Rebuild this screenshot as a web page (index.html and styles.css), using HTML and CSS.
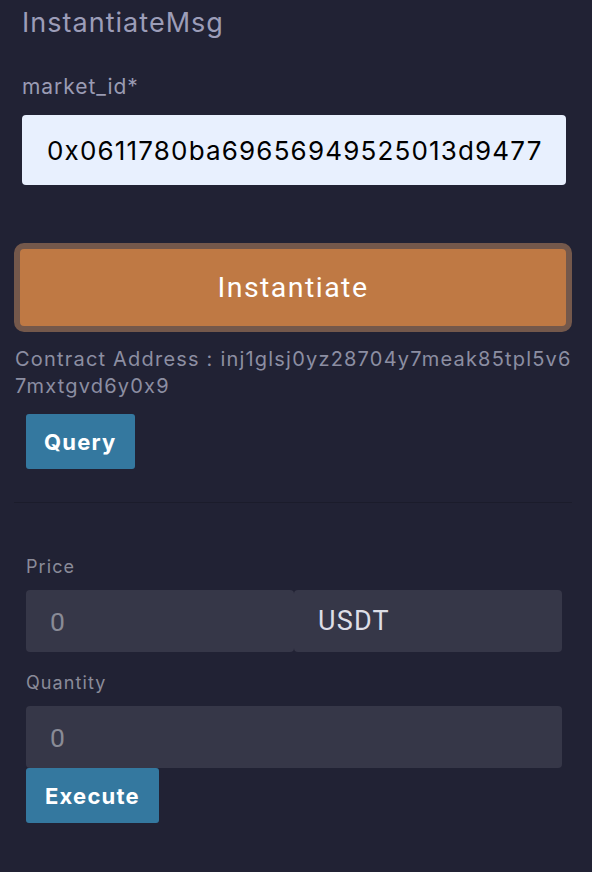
FILE: index.html
```html
<!DOCTYPE html>
<html lang="en">
<head>
<meta charset="utf-8">
<title>InstantiateMsg</title>
<link rel="stylesheet" href="styles.css">
</head>
<body>
<div class="page">
  <section class="msg">
    <h2 class="msg-title">InstantiateMsg</h2>
    <label class="msg-label" for="market">market_id*</label>
    <input id="market" class="light-input" type="text" value="0x0611780ba69656949525013d9477">
  </section>

  <button class="btn-instantiate" type="button">Instantiate</button>

  <p class="address">Contract Address : inj1glsj0yz28704y7meak85tpl5v67mxtgvd6y0x9</p>

  <button class="btn-blue btn-query" type="button">Query</button>

  <hr class="divider">

  <section class="exec">
    <label class="exec-label" for="price">Price</label>
    <div class="price-group">
      <input id="price" class="dark-input group-input" type="text" placeholder="0">
      <span class="unit">USDT</span>
    </div>

    <label class="exec-label exec-label-qty" for="qty">Quantity</label>
    <input id="qty" class="dark-input" type="text" placeholder="0">
    <button class="btn-blue btn-execute" type="button">Execute</button>
  </section>
</div>
</body>
</html>
```
FILE: styles.css
```css
* { box-sizing: border-box; }

html, body {
  margin: 0;
  padding: 0;
  background: #212234;
}

body {
  font-family: Inter, "Noto Sans", sans-serif;
  letter-spacing: 0.055em;
  width: 592px;
  height: 872px;
  overflow: hidden;
}

.page {
  padding: 7px 20px 0 14px;
}

.msg {
  padding: 0 6px 0 8px;
  display: flex;
  flex-direction: column;
  align-items: stretch;
}

.msg-title {
  margin: 0;
  font-size: 27px;
  line-height: 32px;
  font-weight: 400;
  color: #9c9db8;
  letter-spacing: 0.038em;
}

.msg-label {
  display: block;
  margin-top: 35px;
  font-size: 21px;
  line-height: 26px;
  color: #9a9bb3;
  letter-spacing: 0.045em;
}

.light-input {
  margin-top: 15px;
  height: 70px;
  width: 100%;
  border: 0;
  border-radius: 4px;
  background: #e8f0fe;
  color: #000;
  font-family: Inter, "Noto Sans", sans-serif;
  font-size: 26px;
  letter-spacing: 0.045em;
  padding: 0 10px 0 25px;
  outline: none;
}

.btn-instantiate {
  display: block;
  width: 100%;
  margin-top: 58px;
  height: 89px;
  border: 6px solid #74584b;
  border-radius: 10px;
  background: #bf7944;
  color: #fff;
  font-family: Roboto, "Noto Sans", sans-serif;
  font-size: 28.5px;
  letter-spacing: 0.051em;
  font-weight: 400;
  padding: 0;
  cursor: pointer;
}

.address {
  margin: 14px 0 0;
  padding-left: 1px;
  font-size: 20px;
  line-height: 27px;
  color: #8c8ea2;
  word-break: break-all;
  letter-spacing: 0.06em;
}

.btn-blue {
  display: block;
  height: 55px;
  border: 0;
  border-radius: 3px;
  background: #34789f;
  color: #fff;
  font-family: Inter, "Noto Sans", sans-serif;
  font-size: 22px;
  font-weight: 700;
  letter-spacing: 0.055em;
  padding: 0 18px;
  cursor: pointer;
}

.btn-query {
  margin: 14px 0 0 12px;
}

.divider {
  margin: 33px 0 0;
  border: 0;
  height: 1px;
  background: #1b1c2b;
}

.exec {
  padding: 0 10px 0 12px;
  display: flex;
  flex-direction: column;
  align-items: flex-start;
}

.exec-label {
  display: block;
  margin-top: 52px;
  margin-bottom: 11px;
  font-size: 18px;
  line-height: 24px;
  color: #8a8b99;
  letter-spacing: 0.06em;
}

.exec-label-qty {
  margin-top: 19px;
}

.price-group {
  display: flex;
  width: 100%;
  height: 62px;
}

.dark-input {
  width: 100%;
  height: 62px;
  border: 0;
  border-radius: 4px;
  background: #363748;
  color: #dddee6;
  font-family: Roboto, "Noto Sans", sans-serif;
  font-size: 26.5px;
  letter-spacing: 0.04em;
  padding: 0 10px 0 24px;
  outline: none;
}

.dark-input::placeholder {
  color: #898b96;
  opacity: 1;
}

.group-input {
  flex: 0 0 268px;
  width: 268px;
}

.unit {
  flex: 1;
  display: flex;
  align-items: center;
  background: #363748;
  border-radius: 4px;
  padding-left: 24px;
  color: #dddee6;
  font-family: Roboto, "Noto Sans", sans-serif;
  font-size: 27px;
  letter-spacing: 0.045em;
}

.btn-execute {
  margin-top: 0;
  padding: 0 19px;
}
```
